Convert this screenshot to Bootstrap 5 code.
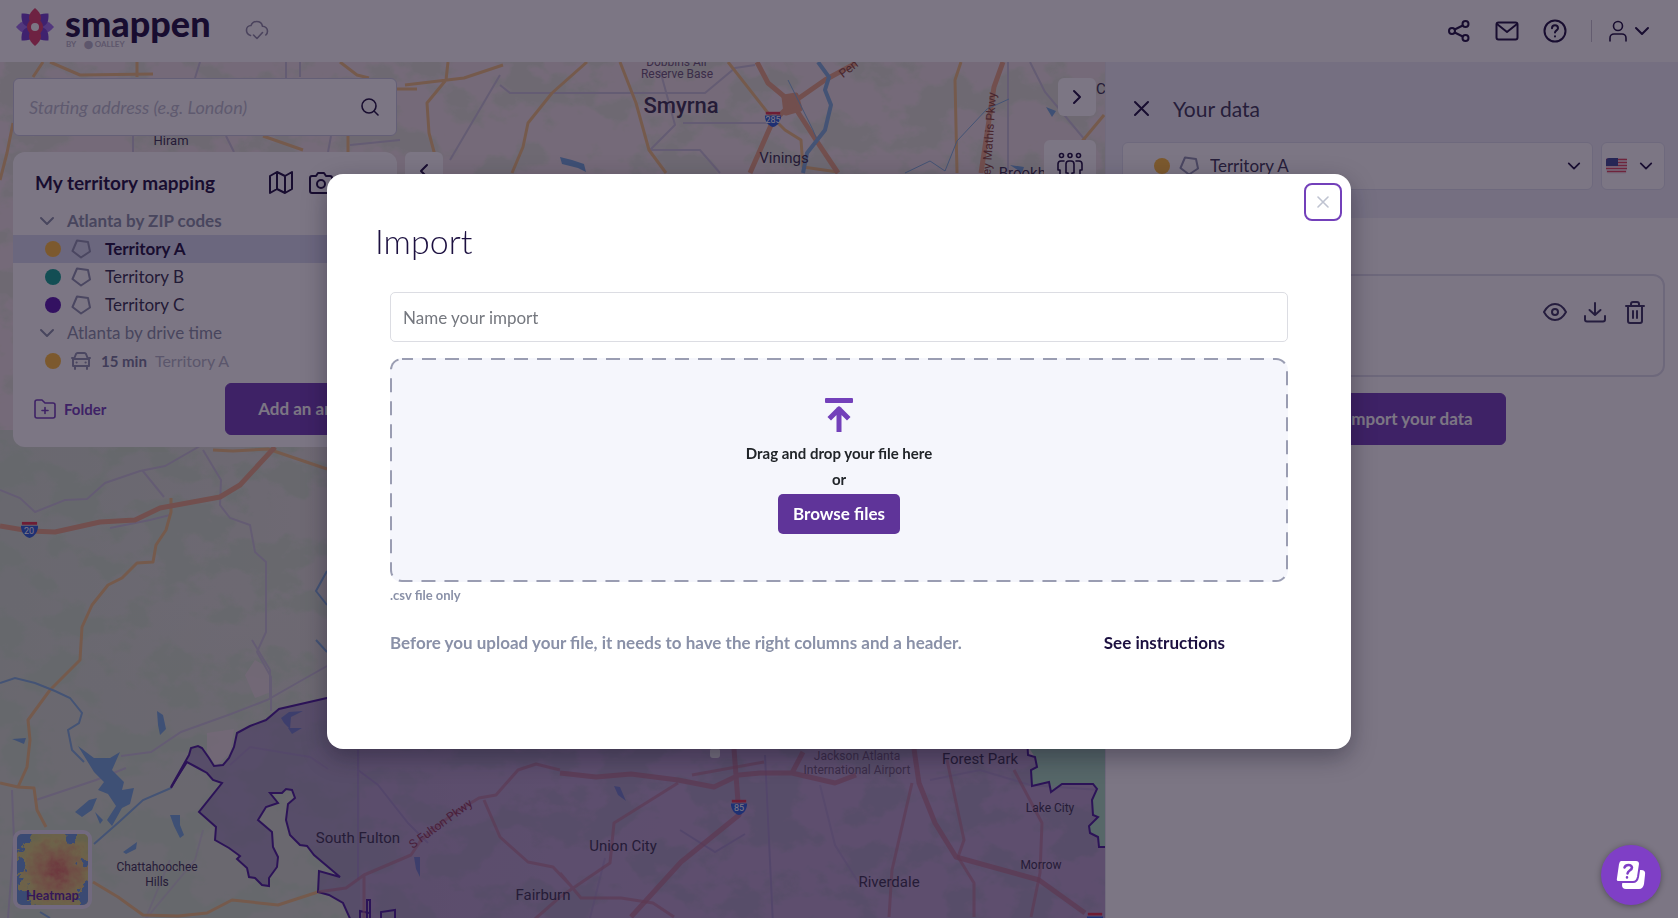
<!DOCTYPE html>
<html lang="en">
<head>
<meta charset="utf-8">
<meta name="viewport" content="width=device-width, initial-scale=1">
<title>smappen</title>
<link href="https://cdn.jsdelivr.net/npm/bootstrap@5.3.0/dist/css/bootstrap.min.css" rel="stylesheet">
<style>
  :root { --ink:#1c1040; --brand:#7340ba; --mute:#8a91a8; --line:#dcdde8; }
  body { font-family: Lato, "Open Sans", sans-serif; font-size:17px; line-height:24px; color:var(--ink); background:#fff; overflow:hidden; }
  svg { display:block; flex:none; }
  .ico { fill:none; stroke:currentColor; stroke-width:2; stroke-linecap:round; stroke-linejoin:round; }
  .thin { stroke-width:1.6; }
  .topbar { height:62px; padding:0 28px 0 15px; background:#fff; }
  .wordmark { font-size:36px; line-height:34px; font-weight:900; color:var(--ink); margin-left:10px; }
  .byline { font-size:8px; line-height:10px; font-weight:700; color:#b9b7c8; left:51px; top:33px; }
  .cloud { color:#8f8ca6; margin-left:34px; }
  .icon-btn { padding:0; border:0; background:none; color:var(--ink); display:flex; align-items:center; }
  .map-area { min-width:0; background:#efe5e6; }
  .map-art { position:absolute; inset:0; width:100%; height:100%; }
  .map-ui { position:relative; padding:16px 9px 9px 13px; }
  .left-col { width:384px; }
  .search-box { height:58px; background:#fff; border:1px solid #c9cbe0; border-radius:6px; padding:0 17px 0 15px; }
  .search-box input { border:0; outline:0; background:none; font-style:italic; font-size:18px; padding:0; color:var(--ink); }
  .search-box input::placeholder { color:#bdbfd0; }
  .tree-panel { background:#fff; border-radius:12px; padding:13px 0 12px; height:295px; }
  .tree-head { min-height:36px; padding:0 16px 0 22px; margin-bottom:6px; }
  .panel-title { font-size:19px; line-height:24px; font-weight:700; margin:0; }
  .tree-row { height:28px; display:flex; align-items:center; }
  .tree-folder { padding-left:26px; gap:12px; color:var(--mute); }
  .tree-item { padding-left:32px; gap:10px; color:#34304f; }
  .tree-item.selected { background:#d9dcf2; font-weight:700; color:var(--ink); }
  .tree-item svg { color:#8f94b0; }
  .travel { display:flex; gap:8px; font-size:16px; color:#b4b6c8; }
  .travel b { font-size:15px; color:#777c9c; }
  .folder-btn { padding-left:21px; font-size:15px; color:var(--brand); }
  .spot { width:16px; height:16px; border-radius:50%; flex:none; }
  .yellow { background:#ffbe3c; } .teal { background:#10a593; } .violet { background:#5a1bb0; }
  .btn-brand { --bs-btn-bg:#7340ba; --bs-btn-color:#fff; --bs-btn-border-color:#7340ba; --bs-btn-hover-bg:#5f3499; --bs-btn-hover-color:#fff; border-radius:6px; font-weight:700; font-size:17px; height:52px; white-space:nowrap; padding:0 32px; }
  .btn-import { padding-left:64px; }
  .map-btn { width:38px; height:38px; background:#fff; border:0; border-radius:6px; padding:0; display:flex; align-items:center; justify-content:center; color:var(--ink); }
  .map-btn.large { width:52px; height:52px; }
  .map-btn.collapse-left { margin-top:74px; }
  .heat { width:79px; height:79px; border:4px solid #e8e4f4; border-radius:9px; padding:0; overflow:hidden; margin-top:auto; background:#e3d67a; position:relative; }
  .heat span { position:absolute; left:0; right:0; bottom:0; font-size:13px; line-height:20px; font-weight:700; color:#5c2a9c; }
  .side { flex:0 0 34.15%; background:#fff; border-left:1px solid #e6e6f0; }
  .side-head { background:#eff0f9; height:156px; padding:29px 13px 0 16px; }
  .side-body { padding:56px 13px 0 16px; }
  .side-title { font-size:21px; line-height:24px; font-weight:400; margin:0; color:#3c3858; }
  .pick { position:relative; height:48px; background:#fff; border:1px solid #dfe1ee; border-radius:6px; }
  .pick-flag { width:64px; }
  .pick select { width:100%; height:100%; border:0; outline:0; background:none; appearance:none; padding:0 40px 0 87px; color:#3c3858; }
  .pick .deco { position:absolute; left:31px; top:0; bottom:0; display:flex; align-items:center; gap:9px; pointer-events:none; color:#8f94b0; }
  .pick-flag .deco { left:4px; }
  .pick .tail { position:absolute; right:11px; top:0; bottom:0; display:flex; align-items:center; pointer-events:none; }
  .data-card { height:103px; border:2px solid #dedfeb; border-radius:12px; padding:24px 16px; }
  .data-card .icon-btn { color:#3a3560; }
  .modal-backdrop.tint { background:#160b24; opacity:.56; }
  .import-dialog { max-width:1024px; margin:19vh auto 0; }
  .import-dialog .modal-content { border:0; border-radius:16px; min-height:575px; padding:47px 63px; box-shadow:0 8px 24px rgba(10,5,25,.35); }
  .import-title { font-size:34px; line-height:40px; font-weight:300; margin:0 0 31px -15px; }
  .close-btn { position:absolute; right:9px; top:9px; width:38px; height:38px; background:#fff; border:2px solid var(--brand); border-radius:8px; padding:0; display:flex; align-items:center; justify-content:center; color:#bfc3d1; }
  .name-input { height:50px; border:1px solid #dcdde3; border-radius:5px; padding:0 12px; font-size:17px; }
  .name-input::placeholder { color:#75787f; }
  .drop { position:relative; height:224px; margin-top:16px; padding-top:38px; background:#f5f6fc; border-radius:12px; overflow:hidden; text-align:center; font-size:15px; font-weight:700; line-height:26px; color:#212529; }
  .drop .dashes { position:absolute; inset:0; width:100%; height:100%; pointer-events:none; }
  .btn-browse { height:40px; background:#5f3499; color:#fff; font-size:17px; font-weight:700; padding:0 15px; border:0; border-radius:5px; margin-top:2px; }
  .hint { font-size:13px; line-height:20px; font-weight:700; color:var(--mute); margin-top:3px; }
  .note-row { margin-top:26px; padding-right:63px; font-weight:700; }
  .note-row p { color:var(--mute); margin:0; }
  .note-row a { color:var(--ink); text-decoration:none; }
  .chat { position:fixed; right:17px; bottom:13px; width:60px; height:60px; border:0; border-radius:50%; background:#7f3fc6; padding:0; z-index:1060; display:flex; align-items:center; justify-content:center; box-shadow:0 1px 6px rgba(0,0,0,.35); }
  .lbl { font-family:Roboto, sans-serif; fill:#3a3350; text-anchor:middle; }
</style>
</head>
<body class="vh-100 d-flex flex-column">

<svg width="0" height="0" class="position-absolute" aria-hidden="true">
  <symbol id="penta" viewBox="0 0 20 20"><path d="M6 1.500 17 3l2 9.500-9 6L1.500 12z"/></symbol>
  <symbol id="down" viewBox="0 0 16 16"><path d="m2 5 6 6 6-6"/></symbol>
</svg>

<header class="topbar d-flex align-items-center">
  <a href="#" class="position-relative d-flex align-items-center text-decoration-none" aria-label="smappen">
    <svg width="40" height="40" viewBox="-20 -20 40 40" class="mb-2">
      <g fill="#a070ee"><path id="pt" d="M0-19C7-13 9-7 0 0-9-7-7-13 0-19z" transform="rotate(90)"/><use href="#pt" transform="rotate(180)"/></g>
      <g fill="#7440d0"><use href="#pt" transform="rotate(-45)"/><use href="#pt" transform="rotate(45)"/><use href="#pt" transform="rotate(135)"/><use href="#pt" transform="rotate(225)"/></g>
      <g fill="#e0406a"><use href="#pt" transform="rotate(90)"/><use href="#pt" transform="rotate(-90)"/><circle r="8"/></g>
      <circle r="4" fill="#fff"/>
    </svg>
    <span class="wordmark mb-3">smappen</span>
    <span class="byline position-absolute">BY &nbsp;&nbsp; ⬤ OALLEY</span>
  </a>
  <svg class="ico thin cloud" width="24" height="24" viewBox="0 0 24 24"><path d="M5.500 16.500A5.500 5.500 0 0 1 1.500 11c0-2.500 2-4.500 4.500-4.500 1-2.500 3-4 5.500-4 3 0 5.500 2 6 4.800 3 0 5 2.400 5 4.900 0 1.500-.6 2.800-1.700 3.800M8.500 16l3.500 3.500 5.500-6"/></svg>
  <nav class="ms-auto d-flex align-items-center gap-4" aria-label="Account">
    <button class="icon-btn" aria-label="Share"><svg class="ico" width="24" height="24" viewBox="0 0 24 24"><circle cx="18.500" cy="5" r="3"/><circle cx="5" cy="12" r="3"/><circle cx="18.500" cy="19" r="3"/><path d="m7.700 10.500 8-4M7.700 13.500l8 4"/></svg></button>
    <button class="icon-btn" aria-label="Messages"><svg class="ico" width="24" height="24" viewBox="0 0 24 24"><rect x="1.500" y="3.500" width="21" height="17" rx="2"/><path d="m2 5 10 8 10-8"/></svg></button>
    <button class="icon-btn" aria-label="Help"><svg class="ico" width="24" height="24" viewBox="0 0 24 24"><circle cx="12" cy="12" r="10.500"/><path d="M9 9.200a3 3 0 0 1 6 0c0 2-3 2.300-3 4.300M12 17.200v.2"/></svg></button>
    <span class="d-flex align-items-center gap-3">
      <span class="vr"></span>
      <button class="icon-btn gap-1" aria-label="Profile"><svg class="ico thin" width="22" height="22" viewBox="0 0 22 22"><circle cx="10" cy="6" r="4.500"/><path d="M2 21v-3a4 4 0 0 1 4-4h8a4 4 0 0 1 4 4v3"/></svg><svg class="ico" width="16" height="16"><use href="#down"/></svg></button>
    </span>
  </nav>
</header>

<main class="flex-grow-1 d-flex" style="min-height:0">
  <section class="map-area flex-grow-1 position-relative d-flex" aria-label="Map">
    <svg class="map-art" viewBox="0 62 1105 856" preserveAspectRatio="xMinYMin slice">
      <defs>
        <filter id="woods" x="0" y="0" width="100%" height="100%" color-interpolation-filters="sRGB"><feTurbulence type="fractalNoise" baseFrequency=".02 .026" numOctaves="5" seed="7"/><feColorMatrix values="0 0 0 0 .79  0 0 0 0 .88  0 0 0 0 .77  9 0 0 0 -4.300"/></filter>
        <linearGradient id="west"><stop offset="0" stop-color="#d3e0cf"/><stop offset=".28" stop-color="#d9e0d3" stop-opacity=".7"/><stop offset=".6" stop-color="#e6e0e0" stop-opacity="0"/></linearGradient>
        <linearGradient id="southward" x2="0" y2="1"><stop offset="0" stop-color="#d6dfd0" stop-opacity="0"/><stop offset=".6" stop-color="#d6dfd0"/></linearGradient>
        <symbol id="shield" viewBox="0 0 20 20"><path d="M2 2h16v3H2z" fill="#e0354a"/><path d="M1 6h18c0 6-3 11-9 13C4 17 1 12 1 6z" fill="#2a60d8"/></symbol>
      </defs>
      <rect y="62" width="1105" height="856" fill="#efe4e5"/>
      <rect y="430" width="1105" height="488" fill="url(#west)"/>
      <rect y="600" width="360" height="318" fill="url(#southward)"/>
      <rect y="62" width="1105" height="390" filter="url(#woods)" opacity=".4"/>
      <rect y="440" width="1105" height="478" filter="url(#woods)" opacity=".6"/>
      <path d="M207 733l27-4-4 24-14 13-9-14zM245 675l10-15 14 8 2 24-16 6z" fill="#efdfe6" opacity=".7"/>
      <path d="M1027 745l8 12 2 10-6 3 1 16 17-4 2 10 11-8h31l4 5-5 11 1 15 5 2-9 9 1 7 8 4 1 10h6V745z" fill="#a9dcc0"/>
      <g fill="none" stroke="#c9c3d8" stroke-width="2">
        <path d="M0 490l20 8 15 14 30-12 22-1 18-16 35-12 25-5 35-20M142 470l22 27M203 450l18 30-1 25 10 13 20 7 5 27 11 10v70l-9 20 14 25v34M170 515l-20 5-40 8"/>
        <path d="M327 666l-30 17-30 17-36 14-50 18-30 20-30 4M36 800l60-20 30-12M252 640l18 30v30M12 790l2 50-6 78M500 85l10 8 40 0h155l30-25 20-3M660 70l15 55-25 25 50 0 20 23M683 123l30 0h60M500 75l-50 85M358 750v130M358 770l20 15 30 38 20 20M300 62v15M286 62v17M195 78l5-16M133 136v17M226 136l8 16M331 136l-3 16M350 145l50-5M680 830l35 22 30-18M765 755l8 170M1008 62v110M1030 62l15 30 50 60"/>
        <path d="M230 765l20-18 60 10 18 12M820 785l15 60 25 40M590 918l15-60M930 780l50-10 50 15 70 5M170 860l-25 60 50-60 8-30" opacity=".6"/>
      </g>
      <g fill="none" stroke="#eebf80" stroke-width="3" stroke-linejoin="round">
        <path d="M171 498v14l-5 18-10 15-3 17-16 1-15 15-14 7-16 20-10 22-2 33-30 30-22 30 2 20-3 27-9 20M0 783l18 4 16 1 3 22 9 17M93 882l25 15 25 18 35 1 29-3 25-13 46 5 40-13M213 450l20 1 35-2 59 20"/>
        <path d="M448 62l-2 18-19 23 2 30 8 30M405 85l59-7 39-13M587 62l-35 31-24 30-5 24-11 26M620 62l16 41 13 47 17 23M728 62l40 51 17 17 16 10 2 27 35 5M961 62l-6 18 2 93M33 77l10-15M50 62l30 13 73-1M137 62v15M340 62l17 13 12 3M397 89h20M13 123l-6 30-7 27M263 136l40 14M348 136v16M1104 115l-25 30"/>
      </g>
      <g fill="none" stroke="#e8a684" stroke-width="5" stroke-linejoin="round">
        <path d="M0 526l30 5 25 1 45-10 35-2 25-12 60-11 20-12 35-38"/>
        <path d="M757 62l11 21 24 20 24 37 22 33M856 63l-31 17-33 23-20 20-22 50M1003 62l-9 25-13 86"/>
        <path d="M784 97l12-2 4 14-14 4z" fill="#e8a684"/>
      </g>
      <g fill="none" stroke="#7fb0dc" stroke-width="3">
        <path d="M818 62l11 15-4 13 6 15-6 25-18 23-4 20" stroke-width="4"/>
        <path d="M788 80l25 50 4 10M905 173l25-12 15 10 12-30 30-32 22-10" stroke-width="1"/>
        <path d="M0 683l15-5 20 5 20 8 15 7 12 15-3 10-11 7 4 20 12 12M171 788l-28 12-24 22-25 22M316 640l11 12M327 571l-11 20 11 14M50 918l-10-6" stroke-width="2"/>
      </g>
      <g fill="#73a8dc">
        <path d="M78 746l16 12 16 0 10-6-8 18 12 12-2 8 12-2-4 16-8 4-10 18-5-6 9-14-8-12-10-4 6-8-10-10z"/><path d="M75 812l14-12 8-2-5 12-10 7zM95 812l8 8-3 4zM157 711l6 4 3 14-6 6-2-10zM170 815l10 0 0 10 4 10-4 3-6-12zM123 852l14-10-1 7-10 5zM12 739l14-1-2 6zM281 718l8-6 14-1-12 6-1 12-6-6zM288 728l14 0-10 6zM414 857l6 0 0 20-4-8zM614 786l6 1 6 14-8-6zM560 157l12 3 12 4 2 8-8-4-16-4zM1046 107l10 4-4 6zM1010 165l14 2-2 6z"/>
      </g>
      <path d="M340 695l-61 14-13 11-16 6-13 7-3 14-5 11-6 7-9 1-5-8-7-10-4-2-7 2-2 7-18 32 16-25 11 6 9 5 6 7 9 3-23 29 17 15-1 13 14 8 11 8-3 3 10 9 2 9 6 1 7 7 7 1v-8l8-11 1-10-5-10-1-15-14-12 8-13 12-4-8-10h12l4-4 6 1 3 8-7 6-2 16 4 15 10 10 7 1 7 9 26 22-21-6-1 21 11 3 14 8 9 20H1110V847H1099l-1-10-8-4-1-7 9-9-5-2-1-15 5-11-4-5H1062l-11 8-2-10-17 4-1-16 6-3-2-10-7-2-1-20z" fill="#704cac" fill-opacity=".42" stroke="#4a1f9a" stroke-width="2"/>
      <path d="M171 788l15-26M360 918v-7l9 2M367 918v-18h3v18M381 918v-6l14-2v8" fill="none" stroke="#4a1f9a" stroke-width="2"/>
      <g fill="none" stroke="#b8708a" stroke-opacity=".7" stroke-linejoin="round">
        <path stroke-width="5" d="M560 773l36 4 35-3 47 6 36 7 25-12 21-2h32l43 10 21-8M734 749l5 66-58 47-50 55M803 752l-11 21M914 749l5 34 16 40 21 34 83 23 46 33"/>
        <path stroke-width="3" stroke-opacity=".6" d="M318 892l28-4 18-13 47-20 10-15 33-27 25-15 17-3 22-25 18-6 24 6M484 800l16 37 28 25 25 5 17 18M364 875v43M912 783l-20 87-3 47M947 760l17 80-6 17 16 26v34M1014 770l28 53-2 50-9 44M678 783l-64 40-4 40-50 34M560 873l21 25h40l32 5 21 14M692 775l72-13M560 897l-25 22"/>
      </g>
      <rect x="710" y="748" width="10" height="10" rx="3" fill="#f4f4f4"/>
      <g class="lbl" font-size="15">
        <text x="171" y="145" font-size="13">Hiram</text>
        <text x="677" y="66" font-size="12" fill="#6c5878">Dobbins Air</text><text x="677" y="78" font-size="12" fill="#6c5878">Reserve Base</text>
        <text x="681" y="113" font-size="22" font-weight="500">Smyrna</text>
        <text x="784" y="163">Vinings</text>
        <text x="1038" y="178">Brookhaven</text>
        <text x="1105" y="94">Ch</text>
        <text transform="translate(851 72) rotate(-38)" font-size="12" style="fill:#8a4a3c">Pen</text>
        <text transform="translate(993 139) rotate(-86)" font-size="12" style="fill:#8a4a3c">rvey Mathis Pkwy</text>
        <text x="358" y="843">South Fulton</text>
        <text transform="translate(443 827) rotate(-36)" font-size="12" style="fill:#8a3a58">S Fulton Pkwy</text>
        <text x="157" y="871" font-size="12">Chattahoochee</text><text x="157" y="886" font-size="12">Hills</text>
        <text x="543" y="900">Fairburn</text><text x="623" y="851">Union City</text><text x="889" y="887">Riverdale</text>
        <text x="1041" y="869" font-size="12">Morrow</text><text x="1050" y="812" font-size="12">Lake City</text><text x="980" y="764">Forest Park</text>
        <text x="857" y="760" font-size="12" style="fill:#6c5878">Jackson Atlanta</text><text x="857" y="774" font-size="12" style="fill:#6c5878">International Airport</text>
      </g>
      <use href="#shield" x="20" y="520" width="19" height="19"/><use href="#shield" x="763" y="110" width="20" height="18"/><use href="#shield" x="730" y="798" width="18" height="18"/><use href="#shield" x="1086" y="911" width="18" height="18"/>
      <g class="lbl" font-size="9" style="fill:#fff"><text x="29" y="534">20</text><text x="773" y="123">285</text><text x="739" y="811">85</text></g>
    </svg>

    <div class="map-ui flex-grow-1 d-flex gap-2">
      <div class="left-col d-flex flex-column gap-3">
        <form class="search-box d-flex align-items-center gap-2">
          <input class="flex-grow-1" type="text" placeholder="Starting address (e.g. London)" aria-label="Starting address">
          <button type="button" class="icon-btn" aria-label="Search"><svg class="ico thin" width="18" height="18" viewBox="0 0 18 18"><circle cx="8" cy="8" r="7"/><path d="m13 13 4 4"/></svg></button>
        </form>
        <div class="tree-panel d-flex flex-column">
          <div class="tree-head d-flex align-items-center">
            <h2 class="panel-title flex-grow-1">My territory mapping</h2>
            <button class="icon-btn me-3" aria-label="Map style"><svg class="ico" width="24" height="24" viewBox="0 0 24 24"><path d="M1 5v17l7-4 8 4 7-4V1l-7 4-8-4zM8 1v17M16 5v17"/></svg></button>
            <button class="icon-btn me-5" aria-label="Take a screenshot"><svg class="ico" width="24" height="24" viewBox="0 0 24 24"><path d="M1 7a2 2 0 0 1 2-2h4l2-3h6l2 3h4a2 2 0 0 1 2 2v13a2 2 0 0 1-2 2H3a2 2 0 0 1-2-2z"/><circle cx="12" cy="13" r="4"/></svg></button>
          </div>
          <div class="tree-row tree-folder fw-bold"><svg class="ico" width="16" height="16"><use href="#down"/></svg>Atlanta by ZIP codes</div>
          <div class="tree-row tree-item selected"><span class="spot yellow"></span><svg class="ico" width="20" height="20"><use href="#penta"/></svg><span class="ms-1">Territory A</span></div>
          <div class="tree-row tree-item"><span class="spot teal"></span><svg class="ico" width="20" height="20"><use href="#penta"/></svg><span class="ms-1">Territory B</span></div>
          <div class="tree-row tree-item"><span class="spot violet"></span><svg class="ico" width="20" height="20"><use href="#penta"/></svg><span class="ms-1">Territory C</span></div>
          <div class="tree-row tree-folder"><svg class="ico" width="16" height="16"><use href="#down"/></svg>Atlanta by drive time</div>
          <div class="tree-row tree-item"><span class="spot yellow"></span><svg class="ico" width="20" height="20" viewBox="0 0 20 20"><path d="M3 8l2-5q.5-1 1.500-1h7q1 0 1.500 1l2 5M2 8h16v7H2zM4 15v3M16 15v3M5.500 11.500h.2M14.500 11.500h.2M1 7h1M18 7h1"/></svg><span class="travel"><b>15 min</b><span>Territory A</span></span></div>
          <div class="d-flex align-items-center mt-2 pe-3">
            <button class="icon-btn folder-btn gap-2 fw-bold"><svg class="ico thin" width="22" height="20" viewBox="0 0 22 20"><path d="M1 3a2 2 0 0 1 2-2h5l3 3h8a2 2 0 0 1 2 2v11a2 2 0 0 1-2 2H3a2 2 0 0 1-2-2zM11 8.500v6M8 11.500h6"/></svg>Folder</button>
            <button class="btn btn-brand ms-auto">Add an area</button>
          </div>
        </div>
        <button class="heat" aria-label="Heatmap">
          <svg width="71" height="71" viewBox="0 0 71 71"><defs><filter id="rough" x="-10%" y="-10%" width="120%" height="120%"><feTurbulence type="fractalNoise" baseFrequency=".12" numOctaves="3" seed="3"/><feDisplacementMap in="SourceGraphic" scale="22" xChannelSelector="R" yChannelSelector="G"/><feGaussianBlur stdDeviation=".7"/></filter><radialGradient id="hg" cx=".54" cy=".52" r=".7"><stop offset="0" stop-color="#dc7060"/><stop offset=".2" stop-color="#e2a070"/><stop offset=".5" stop-color="#ded27a"/><stop offset=".75" stop-color="#c4cf80"/><stop offset="1" stop-color="#8fbf98"/></radialGradient></defs><g filter="url(#rough)"><rect x="-12" y="-12" width="95" height="95" fill="url(#hg)"/><path d="M-9-9h25l-3 19-8 8-14 4zM50-9h8l2 17-5 6-6-8zM-9 26l16 3 3 8-8 4-11-3zM64 26l15-4v14l-13-2zM-9 42l15 5 4 14 4 20H-9zM66 50l15-4v35H65l-3-18z" fill="#6a9cd8"/></g></svg>
          <span>Heatmap</span>
        </button>
      </div>
      <button class="map-btn collapse-left" aria-label="Collapse panel"><svg class="ico" width="10" height="16" viewBox="0 0 10 16"><path d="M8 2 2 8l6 6"/></svg></button>
      <div class="ms-auto d-flex flex-column align-items-end">
        <button class="map-btn mb-4" aria-label="Close data panel"><svg class="ico" width="10" height="16" viewBox="0 0 10 16"><path d="m2 2 6 6-6 6"/></svg></button>
        <button class="map-btn large" aria-label="Population"><svg class="ico thin" width="26" height="28" viewBox="0 0 26 28"><circle cx="4.500" cy="3.500" r="2"/><circle cx="13" cy="3.500" r="2"/><circle cx="21.500" cy="3.500" r="2"/><path d="M7 9H4a3 3 0 0 0-3 3v6h2v8h4M19 9h3a3 3 0 0 1 3 3v6h-2v8h-4M9 21v-9a3 3 0 0 1 3-3h2a3 3 0 0 1 3 3v9h-2v6h-4v-6z"/></svg></button>
      </div>
    </div>
  </section>

  <aside class="side" aria-label="Your data">
    <div class="side-head">
      <div class="d-flex align-items-center mb-3">
        <button class="icon-btn ms-2 me-4 ps-1" aria-label="Close"><svg class="ico" width="15" height="35" viewBox="0 0 15 35"><path d="m1 11 13 13M14 11 1 24"/></svg></button>
        <h2 class="side-title">Your data</h2>
      </div>
      <div class="d-flex gap-2">
        <div class="pick flex-grow-1">
          <select aria-label="Area"><option>Territory A</option></select>
          <span class="deco"><span class="spot yellow"></span><svg class="ico" width="20" height="20"><use href="#penta"/></svg></span>
          <span class="tail"><svg class="ico" width="14" height="14"><use href="#down"/></svg></span>
        </div>
        <div class="pick pick-flag">
          <select aria-label="Country"><option value="us"></option></select>
          <span class="deco"><svg width="21" height="16" viewBox="0 0 21 16"><rect width="21" height="16" rx="3" fill="#f5f0f4"/><path d="M0 1.500h21M0 4.500h21M0 7.500h21M0 10.500h21M1 13.500h19" stroke="#e0455c" stroke-width="1.500"/><path d="M0 3a3 3 0 0 1 3-3h9v8H0z" fill="#3b4a94"/></svg></span>
          <span class="tail"><svg class="ico" width="14" height="14"><use href="#down"/></svg></span>
        </div>
      </div>
    </div>
    <div class="side-body">
      <div class="data-card d-flex justify-content-end align-items-start gap-3">
        <button class="icon-btn" aria-label="Show"><svg class="ico" width="24" height="24" viewBox="0 0 24 24"><path d="M1 12c3-5.500 7-8 11-8s8 2.500 11 8c-3 5.500-7 8-11 8s-8-2.500-11-8z"/><circle cx="12" cy="12" r="3"/></svg></button>
        <button class="icon-btn" aria-label="Download"><svg class="ico" width="24" height="24" viewBox="0 0 24 24"><path d="M2 16v3.500a2 2 0 0 0 2 2h16a2 2 0 0 0 2-2V16M12 3v12M6.500 10l5.500 5 5.500-5"/></svg></button>
        <button class="icon-btn" aria-label="Delete"><svg class="ico" width="24" height="24" viewBox="0 0 24 24"><path d="M3 6h18M5 6v15a2 2 0 0 0 2 2h10a2 2 0 0 0 2-2V6M8 6V4a2 2 0 0 1 2-2h4a2 2 0 0 1 2 2v2M10 11v7M14 11v7"/></svg></button>
      </div>
      <div class="text-center mt-3"><button class="btn btn-brand btn-import">Import your data</button></div>
    </div>
  </aside>
</main>

<div class="modal-backdrop tint"></div>
<div class="modal d-block" tabindex="-1" role="dialog" aria-modal="true" aria-labelledby="importTitle">
  <div class="modal-dialog import-dialog">
    <div class="modal-content">
      <button class="close-btn" aria-label="Close"><svg class="ico thin" width="12" height="12" viewBox="0 0 12 12"><path d="m1 1 10 10M11 1 1 11"/></svg></button>
      <h1 class="import-title" id="importTitle">Import</h1>
      <input class="form-control name-input" type="text" placeholder="Name your import" aria-label="Name your import">
      <div class="drop">
        <svg class="dashes"><rect width="100%" height="100%" rx="12" fill="none" stroke="#9a9db2" stroke-width="4" stroke-dasharray="14 9" stroke-dashoffset="3"/></svg>
        <svg class="mx-auto mb-2" width="30" height="36" viewBox="0 0 30 36"><rect x="1" y="2" width="28" height="5" rx="1" fill="#7340ba"/><path d="M15 34V14M7 21l8-8 8 8" fill="none" stroke="#7340ba" stroke-width="5" stroke-linejoin="round" stroke-linecap="square"/></svg>
        <div>Drag and drop your file here</div>
        <div>or</div>
        <button class="btn-browse">Browse files</button>
      </div>
      <div class="hint">.csv file only</div>
      <div class="note-row d-flex justify-content-between">
        <p>Before you upload your file, it needs to have the right columns and a header.</p>
        <a href="#">See instructions</a>
      </div>
    </div>
  </div>
</div>

<button class="chat" aria-label="Support chat"><svg width="34" height="34" viewBox="0 0 34 34"><path d="M10 12h17q5 0 4 5l-1 9q-1 5-5 5H12q-4 0-4-4z" fill="#fff"/><path d="M7 2h15q4 0 4 4l-2 13q-1 5-5 5H5q-4 0-3-4L4 6q1-4 3-4z" fill="#fff" stroke="#7f3fc6" stroke-width="2"/><path d="M10.500 9.500q1-2.500 4-2.500t3.500 2.500c0 3-4 2.500-4.500 6M13 19.200v.3" fill="none" stroke="#7f3fc6" stroke-width="2.500" stroke-linecap="round"/></svg></button>

<script src="https://cdn.jsdelivr.net/npm/bootstrap@5.3.0/dist/js/bootstrap.bundle.min.js"></script>
</body>
</html>
